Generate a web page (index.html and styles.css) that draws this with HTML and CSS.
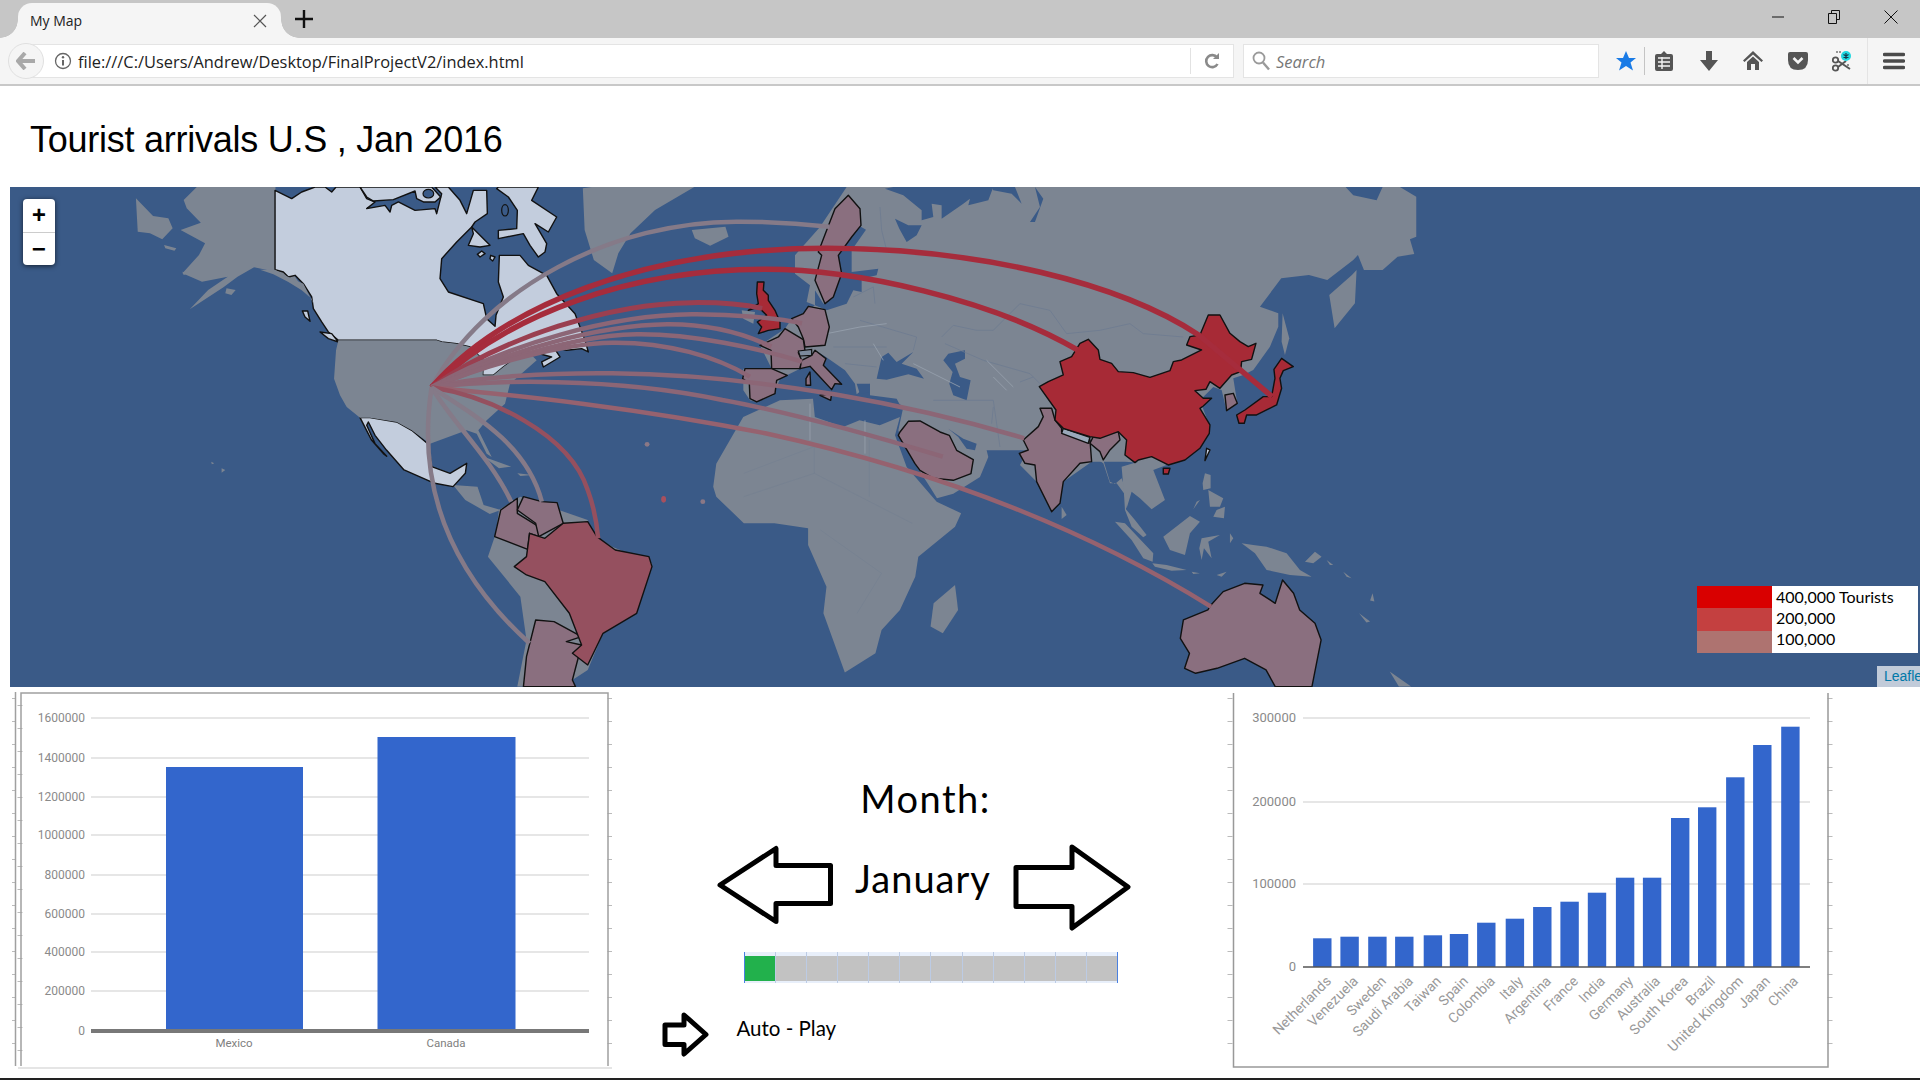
FILE: index.html
```html
<!DOCTYPE html>
<html lang="en">
<head>
  <meta charset="UTF-8">
  <title>My Map</title>
  <link rel="stylesheet" href="styles.css">
</head>
<body>
  <div class="tabstrip">
    <div class="tab">
      <span class="tab-title">My Map</span>
      <svg class="tab-close" width="14" height="14" viewBox="0 0 14 14"><path d="M1 1L13 13M13 1L1 13" stroke="#555" stroke-width="1.2" fill="none"/></svg>
    </div>
    <svg class="newtab" width="18" height="18" viewBox="0 0 18 18"><path d="M9 0V18M0 9H18" stroke="#111" stroke-width="2.4"/></svg>
    <div class="winctl">
      <div class="winbtn"><svg width="12" height="12" viewBox="0 0 12 12"><path d="M0 6H12" stroke="#111" stroke-width="1"/></svg></div>
      <div class="winbtn"><svg width="12" height="14" viewBox="0 0 12 14"><path d="M3.5 3V.5H11.5V9.500H8.500M.5 3.500H8.500V13.500H.5Z" stroke="#111" stroke-width="1" fill="none"/></svg></div>
      <div class="winbtn"><svg width="14" height="14" viewBox="0 0 14 14"><path d="M.5 .5L13.500 13.500M13.500 .5L.5 13.500" stroke="#111" stroke-width="1" fill="none"/></svg></div>
    </div>
  </div>

  <div class="toolbar">
    <div class="back"><svg width="20" height="18" viewBox="0 0 20 18"><path d="M9 1L2 9L9 17M2.500 9H19" stroke="#a9a9a9" stroke-width="4" fill="none"/></svg></div>
    <div class="urlbar">
      <svg class="info" width="18" height="18" viewBox="0 0 18 18"><circle cx="9" cy="9" r="7.500" stroke="#666" stroke-width="1.300" fill="none"/><path d="M9 8V13.500" stroke="#666" stroke-width="2"/><circle cx="9" cy="5.300" r="1.200" fill="#666"/></svg>
      <span class="url">file:///C:/Users/Andrew/Desktop/FinalProjectV2/index.html</span>
      <span class="url-sep"></span>
      <svg class="reload" width="16" height="18" viewBox="0 0 16 18"><path d="M13 5.500A6 6 0 1 0 13.500 12" stroke="#8a8a8a" stroke-width="2.600" fill="none"/><path d="M9 7H15V1Z" fill="#8a8a8a"/></svg>
    </div>
    <div class="searchbar">
      <svg width="18" height="20" viewBox="0 0 18 20"><circle cx="7" cy="7" r="5.500" stroke="#9a9a9a" stroke-width="1.800" fill="none"/><path d="M11 11.500L17 18.500" stroke="#9a9a9a" stroke-width="2.400"/></svg>
      <span class="search-text">Search</span>
    </div>
    <svg class="star" width="20" height="20" viewBox="0 0 20 20"><path d="M10 0L13 7H20L14.500 11.500L17 19.500L10 15L3 19.500L5.500 11.500L0 7H7Z" fill="#1a7be6"/></svg>
    <span class="tool-sep first"></span>
    <div class="tools">
      <svg width="20" height="20" viewBox="0 0 20 20"><path d="M7 3L10 0L13 3H17Q19 3 19 5V18Q19 20 17 20H3Q1 20 1 18V5Q1 3 3 3Z" fill="#555"/><path d="M4 7H16M4 11H16M4 15H16M8 6V18" stroke="#f5f5f5" stroke-width="1.400"/></svg>
      <svg width="20" height="20" viewBox="0 0 20 20"><path d="M7 0H13V9H19L10 20L1 9H7Z" fill="#555"/></svg>
      <svg width="20" height="20" viewBox="0 0 20 20"><path d="M10 0L20 9.500L18.500 11L10 3.500L1.500 11L0 9.500Z" fill="#555"/><path d="M4 11L10 5.500L16 11V19H12V13H8V19H4Z" fill="#555"/></svg>
      <svg width="20" height="20" viewBox="0 0 20 20"><path d="M2 1H18Q20 1 20 3V9Q20 19 10 19Q0 19 0 9V3Q0 1 2 1Z" fill="#555"/><path d="M5.500 7L10 11.500L14.500 7" stroke="#f5f5f5" stroke-width="2.600" fill="none"/></svg>
      <svg width="20" height="22" viewBox="0 0 20 22"><circle cx="3.500" cy="18" r="2.700" stroke="#555" stroke-width="1.800" fill="none"/><circle cx="3.500" cy="10" r="2.700" stroke="#555" stroke-width="1.800" fill="none"/><path d="M6 11L18 19M6 17L14 11" stroke="#555" stroke-width="2"/><path d="M4 2H10M16 14V17" stroke="#777" stroke-width="1.600" stroke-dasharray="2 1"/><circle cx="14" cy="6" r="5" fill="#1fd7e0"/><path d="M14 3V9M11.500 4.500L16.500 7.500M16.500 4.500L11.500 7.500" stroke="#15384a" stroke-width="1.200"/></svg>
    </div>
    <span class="tool-sep last"></span>
    <svg class="menu" width="22" height="18" viewBox="0 0 22 18"><path d="M1.500 2.500H20.500M1.500 9H20.500M1.500 15.500H20.500" stroke="#4a4a4a" stroke-width="3.400" stroke-linecap="round"/></svg>
  </div>

  <h1>Tourist arrivals U.S , Jan 2016</h1>

  <div class="map">
    <svg class="world" width="1910" height="500" viewBox="10 187 1910 500">
      <!-- far west and south -->
      <g class="land" transform="translate(0 180) scale(.6122 .3333)">
        <path d="M322 20L450 20L450 268L480 285L500 340L490 310L450 275L415 262L388 290L365 322L310 388L340 330L372 290L330 305L298 280L325 225L335 190L295 150L328 128L305 85L300 60Z"/>
        <path d="M222 55L250 108L275 115L282 145L265 178L245 160L225 155Z"/>
        <path d="M268 195L288 205L285 212L270 205ZM298 275L308 280L300 285ZM370 325L385 330L378 345L368 340Z"/>
        <path d="M952 25L970 20L1135 20L1070 90L1030 160L1010 220L1000 280L970 240L955 150Z"/>
        <path d="M1130 150L1185 140L1190 170L1160 197L1135 175Z"/>
        <path d="M1170 851L1214 711L1274 661L1328 656L1331 711L1377 741L1404 721L1437 736L1470 711L1462 766L1481 861L1530 965L1570 1000L1560 1040L1500 1130L1495 1190L1470 1290L1440 1350L1430 1420L1380 1478L1345 1300L1350 1220L1320 1095L1320 1045L1265 1030L1215 1030L1170 950L1165 920Z"/>
        <path d="M1560 1215L1565 1290L1540 1360L1520 1340L1525 1270Z"/>
        <path d="M2238 1262L2242 1240L2245 1265ZM2220 1300L2238 1325L2232 1328Z"/>
        <path d="M2270 1475L2305 1520L2285 1520Z"/>
        <path d="M790 830L835 860L815 865ZM845 880L870 885L850 888Z"/>
        <path d="M345 845L350 850L346 853ZM362 865L368 870L362 878Z"/>
        <path d="M740 915L780 920L790 975L818 990L800 1002L760 960Z"/>
        <path d="M815 990L850 950L960 1020L965 1060L1000 1100L1065 1150L1040 1300L985 1360L960 1470L935 1500L940 1520L845 1520L860 1380L850 1250L797 1130L810 1060Z"/>
      </g>

      <!-- europe and asia, drawn at 3x from here on -->
      <g transform="translate(700 187) scale(.3333)">
        <g class="land">
          <path d="M440 0L1937 0L1960 25L2030 40L2048 0L2100 0L2149 29L2149 149L2130 157L2143 201L2093 209L2048 249L1992 249L1974 204L1960 219L1882 279L1827 264L1744 274L1680 359L1735 379L1735 419L1710 479L1660 549L1630 564L1600 574L1612 649L1580 671L1565 609L1540 600L1500 640L1530 720L1500 784L1405 830L1370 830L1275 824L1175 824L1090 884L1055 974L1010 884L960 834L985 790L860 790L865 810L840 870L760 920L711 934L690 900L645 830L600 745L595 730L610 660L598 650L590 635L510 625L510 590L470 622L465 590L435 550L378 510L345 490L300 545L240 575L220 625L170 645L150 640L130 610L130 545L215 545L180 475L255 425L275 395L300 385L345 355L320 345L330 295L285 260L285 205L360 120Z"/>
          <path d="M1970 249L1965 349L1904 424L1888 324L1956 264Z"/>
          <path d="M125 370L165 375L160 410L130 395Z"/>
          <g transform="translate(900 339)">
            <path d="M275 445L300 455L310 480L330 545L345 552L365 535L385 590L378 628L405 660L440 705L430 712L395 680L375 630L372 580L350 550L330 550L310 490L295 480L275 485Z"/>
            <path d="M405 488L470 475L500 495L460 510L495 600L455 628L420 595L395 575L380 625L370 560L365 500Z"/>
            <path d="M185 620L200 645L185 657Z"/>
            <path d="M345 665L375 670L460 760L458 785L430 775L395 720Z"/>
            <path d="M457 790L500 795L560 810L515 812L465 800Z"/>
            <path d="M490 710L570 648L600 665L570 700L555 765L510 750Z"/>
            <path d="M605 715L660 705L625 725L635 775L612 745L605 780L598 745Z"/>
            <path d="M615 520L632 525L632 565L610 570L608 550ZM625 570L670 595L660 620L630 620ZM650 630L675 620L672 655L640 650ZM600 600L580 628L590 605Z"/>
            <path d="M725 730L760 735L800 740L860 760L900 810L935 830L870 825L800 810L765 760Z"/>
            <path d="M915 785L945 755L965 770L940 790ZM690 700L700 715L690 730ZM575 815L600 820L580 822ZM650 825L680 815L665 830ZM980 780L1000 795L990 795ZM1030 815L1055 835L1040 830Z"/>
          </g>
        </g>
        <g class="water">
          <path d="M555 5L610 25L665 70L665 100L700 90L695 50L725 55L725 95L790 50L810 35L805 55L865 40L880 0L580 0Z"/>
          <path d="M585 95L625 115L665 115L650 145L620 165L598 125Z"/>
          <path d="M945 0L965 50L935 20L880 10L875 0Z"/>
          <path d="M1005 0L1030 35L1005 105L990 105L1020 60Z"/>
          <path d="M480 118L498 128L455 190L455 255L535 245L530 265L485 275L485 315L460 310L440 350L380 370L345 355L345 310L370 350L400 330L425 260L415 205L455 150Z"/>
          <path d="M530 575L545 510L565 497L590 525L640 495L605 530L650 545L672 575L625 562L560 578Z"/>
          <path d="M730 520L745 500L795 490L795 515L765 530L780 570L812 580L800 640L760 625L748 590L758 555Z"/>
          <path d="M470 590L510 590L510 615L480 622Z"/>
          <path d="M745 725L775 750L800 785L825 790L830 770L790 755Z"/>
        </g>
        <g class="borders">
          <path d="M725 450L760 415L830 430L880 430L960 350L1050 370L1100 440L1200 430L1290 410L1330 440L1450 450"/>
          <path d="M735 470L850 520L990 560L1020 590M880 660L875 710M960 585L1000 570M700 640L880 640L900 780"/>
          <path d="M540 60L545 130L560 190M460 330L520 300L525 350M480 400L650 450L640 490M400 480L560 480M435 530L530 540"/>
        </g>
        <g class="borders pale">
          <path d="M380 440L480 420L560 410M520 470L550 520M640 530L780 600M860 520L940 600M880 570L920 610"/>
          <path d="M330 650L330 760M495 700L495 800"/>
        </g>
        <g class="visited light" transform="translate(-1320 0)">
          <path d="M45 10L95 35L125 15L165 0L195 0L215 15L228 0L300 0L320 35L345 45L320 65L375 55L390 75L395 55L415 45L465 70L525 65L530 80L545 20L525 0L565 0L600 40L620 80L640 10L680 10L682 80L645 105L635 120L590 165L545 215L540 275L565 315L670 350L680 395L705 418L708 385L730 330L715 285L718 205L780 205L805 235L860 265L890 320L945 380L975 460L985 495L965 485L920 490L880 480L900 510L850 540L845 525L875 510L800 490L730 540L700 565L668 565L670 520L630 480L590 470L545 465L530 460L235 460L205 435L185 405L160 365L155 330L130 290L105 265L85 270L70 255L45 248Z"/>
          <path d="M715 0L835 0L815 40L890 90L865 135L825 110L860 170L855 195L835 210L810 175L790 140L715 155L715 130L770 125L772 70L745 30L710 5Z"/>
          <path d="M300 0L320 30L340 42L400 38L465 12L470 35L490 45L525 45L542 30L515 0Z"/>
          <path d="M635 120L690 175L660 180L625 175L640 140Z"/>
          <path d="M665 192L675 200L660 210L652 202ZM692 205L705 210L698 222L690 215Z"/>
          <path d="M127 372L143 372L150 403L135 390ZM180 435L215 440L235 465L205 455Z"/>
          <path d="M300 692L330 692L410 705L455 730L505 772L515 839L570 859L620 829L616 859L579 899L524 889L432 849L380 790L345 745L325 705L320 715L345 770L380 808L370 800L335 760Z"/>
        </g>
        <g class="land" transform="translate(-1320 0)">
          <path d="M0 248L45 248L85 270L130 290L160 350L155 335L125 310L85 285L40 262Z"/>
          <path d="M235 460L530 460L545 465L590 470L630 480L670 520L668 565L700 565L730 540L800 490L830 520L750 590L735 650L680 700L655 730L695 810L680 800L650 740L620 730L510 770L455 730L410 705L330 692L300 692L260 660L240 625L222 575L228 490Z"/>
        </g>
        <g class="water outline" transform="translate(-1320 0)">
          <ellipse cx="735" cy="70" rx="10" ry="17"/>
          <ellipse cx="505" cy="20" rx="16" ry="13"/>
        </g>
        <g class="visited mauve">
          <path d="M445 25L480 65L483 115L455 150L415 205L425 260L400 330L375 350L345 280L365 205L355 195L380 130L405 65Z"/>
          <path d="M325 358L375 368L388 420L375 475L315 480L310 455L295 420L275 395L310 380Z"/>
          <path d="M255 425L310 458L315 490L295 497L305 520L300 545L215 545L213 490L180 475L235 450Z"/>
          <path d="M305 520L335 505L345 490L378 515L370 535L425 592L405 590L395 608L355 565L330 538L300 545ZM360 625L395 620L392 640ZM318 575L330 555L332 595L318 595Z"/>
          <path d="M135 545L215 545L262 565L230 580L225 620L170 645L150 635L148 590L128 575Z"/>
          <path d="M625 703L660 702L720 735L748 745L770 790L820 818L813 860L760 880L700 874L660 850L645 830L595 745L600 735Z"/>
          <g transform="translate(900 339)">
            <path d="M120 325L155 325L165 360L185 385L185 395L270 420L275 485L240 490L190 545L180 610L155 635L110 545L105 495L75 490L58 460L85 450L70 420L115 380L130 350Z"/>
            <path d="M280 410L355 395L360 420L330 450L310 480L300 455L270 430Z"/>
            <path d="M675 285L700 280L712 310L680 332Z"/>
          </g>
        </g>
        <g class="visited pale-land" transform="translate(900 339)">
          <path d="M190 385L270 412L265 430L185 400Z"/>
        </g>
        <g class="visited light" transform="translate(900 339)">
          <path d="M620 445L630 450L615 482Z"/>
        </g>
        <path class="nation-grey" d="M295 492L335 487L335 505L300 507Z"/>
        <g class="visited china">
          <path d="M172 285L192 285L190 310L205 325L205 340L225 370L240 405L240 425L205 430L175 440L185 420L172 405L200 385L175 360L145 370L175 350L170 320Z"/>
          <g transform="translate(900 339)">
            <path d="M600 105L625 45L660 45L690 100L720 125L745 140L768 130L755 178L725 185L722 215L695 225L660 265L630 245L618 268L585 272L610 295L635 295L610 318L600 325L630 375L628 400L600 445L555 480L505 495L455 470L415 480L405 488L375 465L380 420L355 395L300 415L270 410L190 385L165 360L168 330L118 260L145 245L190 225L180 185L215 170L240 130L265 118L295 150L300 178L335 190L355 215L400 218L450 232L510 212L520 185L545 180L605 150L560 135L570 110Z"/>
            <path d="M845 175L880 200L850 212L840 235L845 265L830 315L800 330L770 345L740 345L733 370L717 370L710 345L735 330L790 290L815 290L825 235L822 208Z"/>
            <path d="M490 505L510 505L505 522L490 522Z"/>
          </g>
        </g>
        <path class="land" d="M1748 379L1768 454L1755 504L1745 464Z" />
      </g>

      <!-- more islands and countries of the south -->
      <g transform="translate(0 180) scale(.6122 .3333)">
        <g class="visited mauve">
          <path d="M845 955L818 990L808 1070L862 1108L865 1060L880 1070L880 1040L845 1000Z"/>
          <path d="M855 950L885 965L910 968L920 1030L880 1070L875 1030L845 990Z"/>
          <path d="M875 1320L905 1325L950 1370L925 1385L950 1395L935 1500L940 1520L855 1520L860 1430Z"/>
          <path d="M1978 1275L1998 1235L2033 1210L2063 1215L2058 1240L2083 1270L2095 1200L2113 1240L2123 1290L2148 1330L2158 1380L2143 1520L2083 1520L2068 1470L2033 1435L1988 1465L1953 1480L1935 1465L1943 1420L1928 1375L1933 1320L1973 1290Z"/>
        </g>
        <path class="visited brazil" d="M920 1030L960 1025L975 1070L1005 1110L1060 1130L1065 1160L1040 1300L985 1360L960 1455L935 1420L950 1395L930 1300L890 1205L860 1185L840 1160L860 1130L865 1060L890 1075Z"/>
        <g class="borders faint">
          <path d="M1215 880L1330 800L1330 880L1215 950M1330 880L1490 1030M1340 1050L1440 1180L1400 1300M1420 780L1420 950"/>
        </g>
        <g class="arcs">
          <path class="a-grey" d="M705 622C790 330 1000 120 1210 125C1260 125 1320 133 1355 140"/>
          <path class="a-top" d="M705 622C820 380 1050 205 1350 205C1600 205 1830 310 1958 465L2078 650"/>
          <path class="a-top" d="M705 622C830 400 1030 268 1250 268C1400 268 1620 360 1760 510"/>
          <path class="a-uk" d="M705 622C820 470 1000 370 1130 368C1180 367 1220 375 1245 385"/>
          <path class="a-mid" d="M705 622C830 490 1000 405 1130 403C1200 402 1270 415 1310 430"/>
          <path class="a-mid" d="M705 622C830 510 980 435 1090 433C1160 432 1220 465 1260 500"/>
          <path class="a-mid" d="M705 622C830 530 950 465 1040 463C1130 461 1240 505 1310 545"/>
          <path class="a-mid" d="M705 622C800 550 920 490 1000 488C1090 486 1170 530 1225 590"/>
          <path class="a-mid" d="M705 622C780 590 900 578 1000 580C1250 585 1500 680 1673 775"/>
          <path class="a-mid" d="M705 622C800 600 1000 590 1180 660C1300 700 1450 780 1540 830"/>
          <path class="a-aus" d="M705 622C800 640 1000 670 1250 760C1500 860 1750 1020 1978 1280"/>
          <path class="a-br" d="M705 622C800 650 930 760 960 930C970 980 975 1030 977 1075"/>
          <path class="a-grey" d="M705 622C770 700 860 790 885 965"/>
          <path class="a-grey" d="M705 622C740 730 800 830 835 965"/>
          <path class="a-grey" d="M705 622C690 800 690 1100 865 1390"/>
        </g>
        <ellipse class="dot-grey" cx="1057" cy="793" rx="4" ry="7"/>
        <ellipse class="dot-red" cx="1084" cy="958" rx="4" ry="10"/>
        <ellipse class="dot-grey" cx="1148" cy="965" rx="4" ry="7"/>
      </g>
    </svg>

    <div class="zoom">
      <div class="zoom-btn">+</div>
      <div class="zoom-btn">&minus;</div>
    </div>

    <div class="legend">
      <div class="swatches">
        <span class="swatch s1"></span>
        <span class="swatch s2"></span>
        <span class="swatch s3"></span>
      </div>
      <div class="legend-labels">
        <div>400,000 Tourists</div>
        <div>200,000</div>
        <div>100,000</div>
      </div>
    </div>

    <div class="attribution">Leaflet</div>
  </div>

  <div class="panels">
    <svg class="chart-left" width="600" height="391" viewBox="12 687 600 391">
      <path class="ticks" d="M12.500 698V1066M20 705V1066M610 698V1066"/>
      <path class="frame" d="M15.500 692V1066M21 1066V693H608V1066"/>
      <path class="frame-base" d="M18 1068H612"/>
      <g class="grid">
        <path d="M91 718H589M91 758H589M91 797H589M91 835H589M91 875H589M91 914H589M91 952H589M91 991H589"/>
      </g>
      <g class="ylabels">
        <text x="85" y="722">1600000</text>
        <text x="85" y="762">1400000</text>
        <text x="85" y="801">1200000</text>
        <text x="85" y="839">1000000</text>
        <text x="85" y="879">800000</text>
        <text x="85" y="918">600000</text>
        <text x="85" y="956">400000</text>
        <text x="85" y="995">200000</text>
        <text x="85" y="1035">0</text>
      </g>
      <rect class="bar" x="166" y="767" width="137" height="262"/>
      <rect class="bar" x="377.500" y="737" width="138" height="292"/>
      <path class="axis-thick" d="M91 1031H589"/>
      <text class="xlabel" x="234" y="1047">Mexico</text>
      <text class="xlabel" x="446" y="1047">Canada</text>
    </svg>

    <div class="controls">
      <div class="month-label">Month:</div>
      <div class="month-row">
        <svg width="116" height="84" viewBox="0 0 116 84"><path class="big-arrow" d="M3 41L59 4.500V21.500H113.500V59.500H59V77.500Z"/></svg>
        <span class="month-name">January</span>
        <svg width="118" height="88" viewBox="0 0 118 88"><path class="big-arrow" d="M3 23.500H59V3L115 43L59 84V62.500H3Z"/></svg>
      </div>
      <div class="progress">
        <span class="cell on"></span><span class="cell"></span><span class="cell"></span><span class="cell"></span>
        <span class="cell"></span><span class="cell"></span><span class="cell"></span><span class="cell"></span>
        <span class="cell"></span><span class="cell"></span><span class="cell"></span><span class="cell"></span>
      </div>
      <div class="autoplay">
        <svg width="47" height="45" viewBox="0 0 47 45"><path class="small-arrow" d="M3 13H22V3L44 22.500L22 42V32.500H3Z"/></svg>
        <span class="autoplay-text">Auto - Play</span>
      </div>
    </div>

    <svg class="chart-right" width="610" height="391" viewBox="1225 687 610 391">
      <path class="ticks" d="M1230 698V1066M1830 698V1066"/>
      <path class="frame" d="M1233.500 693V1067H1828V693"/>
      <g class="grid">
        <path d="M1303 718H1810M1303 802H1810M1303 884H1810"/>
      </g>
      <g class="ylabels big">
        <text x="1296" y="722">300000</text>
        <text x="1296" y="806">200000</text>
        <text x="1296" y="888">100000</text>
        <text x="1296" y="971">0</text>
      </g>
      <g class="bars">
        <rect x="1313.100" y="938.300" width="18.400" height="28.700"/>
        <rect x="1340.400" y="936.700" width="18.400" height="30.300"/>
        <rect x="1368.200" y="936.700" width="18.400" height="30.300"/>
        <rect x="1395.100" y="936.700" width="18.400" height="30.300"/>
        <rect x="1423.700" y="935.300" width="18.400" height="31.700"/>
        <rect x="1449.800" y="934" width="18.400" height="33"/>
        <rect x="1477.100" y="922.700" width="18.400" height="44.300"/>
        <rect x="1505.700" y="918.700" width="18.400" height="48.300"/>
        <rect x="1533.100" y="907" width="18.400" height="60"/>
        <rect x="1560.400" y="901.700" width="18.400" height="65.300"/>
        <rect x="1587.800" y="892.700" width="18.400" height="74.300"/>
        <rect x="1615.900" y="877.700" width="18.400" height="89.300"/>
        <rect x="1642.900" y="877.700" width="18.400" height="89.300"/>
        <rect x="1671" y="818" width="18.400" height="149"/>
        <rect x="1698" y="807.300" width="18.400" height="159.700"/>
        <rect x="1726.100" y="777.300" width="18.400" height="189.700"/>
        <rect x="1753.100" y="745" width="18.400" height="222"/>
        <rect x="1781.200" y="726.700" width="18.400" height="240.300"/>
      </g>
      <path class="axis" d="M1303 967H1810"/>
      <g class="xlabels">
        <text transform="translate(1332 982) rotate(-45)">Netherlands</text>
        <text transform="translate(1359 982) rotate(-45)">Venezuela</text>
        <text transform="translate(1387 982) rotate(-45)">Sweden</text>
        <text transform="translate(1414 982) rotate(-45)">Saudi Arabia</text>
        <text transform="translate(1442 982) rotate(-45)">Taiwan</text>
        <text transform="translate(1469 982) rotate(-45)">Spain</text>
        <text transform="translate(1496 982) rotate(-45)">Colombia</text>
        <text transform="translate(1524 982) rotate(-45)">Italy</text>
        <text transform="translate(1552 982) rotate(-45)">Argentina</text>
        <text transform="translate(1579 982) rotate(-45)">France</text>
        <text transform="translate(1606 982) rotate(-45)">India</text>
        <text transform="translate(1634 982) rotate(-45)">Germany</text>
        <text transform="translate(1661 982) rotate(-45)">Australia</text>
        <text transform="translate(1689 982) rotate(-45)">South Korea</text>
        <text transform="translate(1716 982) rotate(-45)">Brazil</text>
        <text transform="translate(1744 982) rotate(-45)">United Kingdom</text>
        <text transform="translate(1771 982) rotate(-45)">Japan</text>
        <text transform="translate(1799 982) rotate(-45)">China</text>
      </g>
    </svg>
  </div>
  <div class="taskbar"></div>
</body>
</html>
```

FILE: styles.css
```css
html, body {
  margin: 0;
  padding: 0;
  height: 1080px;
  overflow: hidden;
  background: #fff;
  font-family: "Liberation Sans", Arial, sans-serif;
}

/* browser chrome */
.tabstrip {
  display: flex;
  align-items: flex-start;
  height: 38px;
  background: #c6c6c6;
}

.tab {
  position: relative;
  display: flex;
  align-items: center;
  justify-content: space-between;
  box-sizing: border-box;
  width: 263px;
  height: 35px;
  margin: 3px 0 0 18px;
  padding: 0 14px 0 12px;
  background: #f5f5f5;
  border-radius: 14px 14px 0 0;
}

.tab::before,
.tab::after {
  content: "";
  position: absolute;
  bottom: 0;
  width: 18px;
  height: 18px;
}

.tab::before {
  left: -18px;
  background: radial-gradient(circle at 0 0, transparent 17.500px, #f5f5f5 18px);
}

.tab::after {
  right: -18px;
  background: radial-gradient(circle at 100% 0, transparent 17.500px, #f5f5f5 18px);
}

.tab-title {
  font-family: "Open Sans", sans-serif;
  font-size: 14px;
  color: #222;
}

.newtab {
  margin: 10px 0 0 14px;
}

.winctl {
  display: flex;
  margin-left: auto;
  padding-right: 1px;
}

.winbtn {
  display: flex;
  align-items: center;
  justify-content: center;
  width: 56.500px;
  height: 34px;
}

.toolbar {
  display: flex;
  align-items: center;
  box-sizing: border-box;
  height: 48px;
  padding-left: 8px;
  background: #f5f5f5;
  border-bottom: 2px solid #c8c8c8;
}

.back {
  position: relative;
  z-index: 1;
  display: flex;
  align-items: center;
  justify-content: center;
  box-sizing: border-box;
  width: 36px;
  height: 36px;
  background: #f5f5f5;
  border: 1px solid #e0e0e0;
  border-radius: 50%;
}

.urlbar {
  display: flex;
  align-items: center;
  box-sizing: border-box;
  width: 1208px;
  height: 34px;
  margin-left: -18px;
  padding-left: 27px;
  background: #fff;
  border: 1px solid #e4e4e4;
}

.url {
  margin-left: 6px;
  font-family: "Open Sans", sans-serif;
  font-size: 16.400px;
  color: #222;
  white-space: nowrap;
}

.url-sep {
  width: 1px;
  height: 26px;
  margin-left: auto;
  background: #e2e2e2;
}

.reload {
  margin: 0 13px;
}

.searchbar {
  display: flex;
  align-items: center;
  box-sizing: border-box;
  width: 356px;
  height: 34px;
  margin-left: 9px;
  padding-left: 8px;
  background: #fff;
  border: 1px solid #e4e4e4;
}

.search-text {
  margin-left: 6px;
  font-family: "Open Sans", sans-serif;
  font-size: 16.500px;
  font-style: italic;
  color: #777;
}

.star {
  margin-left: 17px;
}

.tool-sep {
  width: 1px;
  height: 28px;
  background: #c4c4c4;
}

.tool-sep.first {
  margin: 0 9px 0 8px;
}

.tool-sep.last {
  height: 46px;
  margin-left: 15px;
  background: #e4e4e4;
}

.tools {
  display: flex;
  align-items: center;
  gap: 24.500px;
}

.menu {
  margin-left: 15px;
}

h1 {
  box-sizing: border-box;
  height: 101px;
  margin: 0;
  padding: 33px 0 0 30px;
  font-size: 36px;
  font-weight: normal;
  letter-spacing: -.25px;
  line-height: 42px;
  color: #000;
}

/* map */
.map {
  position: relative;
  height: 500px;
  margin-left: 10px;
  overflow: hidden;
  background: #3a5a87;
}

.world {
  display: block;
}

.world path,
.world ellipse {
  vector-effect: non-scaling-stroke;
}

.land path,
path.land {
  fill: #7c8592;
}

.water path {
  fill: #3a5a87;
}

.outline ellipse {
  fill: #3a5a87;
  stroke: #111;
  stroke-width: 1.200;
}

.borders path {
  fill: none;
  stroke: #6d7b90;
  stroke-width: .8;
}

.borders.pale path {
  stroke: #98a2ae;
}

.borders.faint path {
  stroke: #737f90;
  stroke-width: .6;
}

.visited path,
.brazil {
  stroke: #111;
  stroke-width: 1.400;
  stroke-linejoin: round;
}

.light path {
  fill: #c3cddd;
}

.pale-land path {
  fill: #9aa9ba;
}

.mauve path {
  fill: #8a6f7f;
}

.brazil {
  fill: #95505f;
}

.china path {
  fill: #a72a36;
}

.nation-grey {
  fill: #7c8a9c;
  stroke: #111;
  stroke-width: 1.200;
}

.arcs path {
  fill: none;
  stroke-width: 4.500;
}

.arcs .a-grey {
  stroke: #857a88;
}

.arcs .a-top {
  stroke: #a62c3c;
  stroke-width: 5.500;
}

.arcs .a-uk {
  stroke: #9a3f50;
  stroke-width: 5;
}

.arcs .a-mid {
  stroke: #8c6676;
}

.arcs .a-aus {
  stroke: #96626f;
}

.arcs .a-br {
  stroke: #95505f;
}

.dot-grey {
  fill: #8b7886;
}

.dot-red {
  fill: #a8505e;
}

.zoom {
  position: absolute;
  top: 12px;
  left: 13px;
  width: 32px;
  background: #fff;
  border-radius: 4px;
  box-shadow: 0 1px 5px rgba(0, 0, 0, .65);
}

.zoom-btn {
  box-sizing: border-box;
  height: 33px;
  padding-top: 2px;
  font-family: "Liberation Mono", monospace;
  font-size: 24px;
  font-weight: bold;
  line-height: 31px;
  text-align: center;
  color: #000;
}

.zoom-btn + .zoom-btn {
  border-top: 1px solid #ccc;
}

.legend {
  position: absolute;
  top: 399px;
  left: 1687px;
  display: flex;
  width: 221px;
  height: 67px;
  background: #fff;
  font-family: Lato, sans-serif;
  font-size: 16px;
  line-height: 21px;
  color: #000;
}

.swatches {
  display: flex;
  flex-direction: column;
  width: 75px;
  margin-right: 4px;
}

.swatch {
  flex: 1;
}

.s1 { background: #d90000; }
.s2 { background: #c44040; }
.s3 { background: #ae7370; }

.attribution {
  position: absolute;
  right: -26px;
  bottom: 0;
  height: 21px;
  padding: 0 20px 0 7px;
  background: #c1cbd9;
  font-size: 14px;
  line-height: 21px;
  color: #0078a8;
}

/* bottom row */
.panels {
  display: flex;
  height: 391px;
}

.chart-left {
  flex: none;
  margin-left: 12px;
}

.chart-right {
  flex: none;
  margin-right: 85px;
}

.frame {
  fill: none;
  stroke: #a0a0a0;
  stroke-width: 1.500;
}

.frame-base {
  stroke: #dcdcdc;
  stroke-width: 1.500;
}

.chart-right .frame {
  stroke: #999;
}

.ticks {
  fill: none;
  stroke: #bbb;
  stroke-width: 5;
  stroke-dasharray: 1 22;
}

.grid path {
  fill: none;
  stroke: #dedede;
  stroke-width: 1.500;
}

.ylabels text {
  font-family: Roboto, sans-serif;
  font-size: 12px;
  fill: #8a8a8a;
  text-anchor: end;
}

.ylabels.big text {
  font-size: 13px;
}

.bar,
.bars rect {
  fill: #3366cc;
}

.axis-thick {
  stroke: #787878;
  stroke-width: 4;
}

.axis {
  stroke: #555;
  stroke-width: 1.500;
}

.xlabel {
  font-family: Roboto, sans-serif;
  font-size: 11.500px;
  fill: #808080;
  text-anchor: middle;
}

.xlabels text {
  font-family: Roboto, sans-serif;
  font-size: 14px;
  fill: #999;
  text-anchor: end;
}

.controls {
  flex: 1;
  display: flex;
  flex-direction: column;
  align-items: center;
  padding-top: 88px;
}

.month-label {
  margin-left: 14px;
  font-family: Lato, sans-serif;
  font-size: 38px;
  letter-spacing: 1.500px;
  line-height: 46px;
  color: #000;
}

.month-row {
  display: flex;
  align-items: flex-start;
  gap: 22px;
  margin: 23px 0 0 11px;
}

.month-name {
  margin-top: 11px;
  font-family: Lato, sans-serif;
  font-size: 38px;
  letter-spacing: 1px;
  line-height: 46px;
  color: #000;
}

.big-arrow {
  fill: #fff;
  stroke: #000;
  stroke-width: 5;
  stroke-linejoin: round;
}

.small-arrow {
  fill: #fff;
  stroke: #000;
  stroke-width: 5;
  stroke-linejoin: round;
}

.progress {
  display: flex;
  box-sizing: border-box;
  width: 374px;
  height: 31px;
  margin: 20px 0 0 25px;
  border-left: 1px solid #4a80e0;
  border-right: 1px solid #4a80e0;
}

.cell {
  flex: 1;
  border-left: 1px solid #bccbe4;
  background: linear-gradient(#e8effa 0 4px, #c2c2c2 4px 29px, #e8effa 29px);
}

.cell.on {
  border-left: 0;
  background: linear-gradient(#e8effa 0 4px, #22b14c 4px 29px, #e8effa 29px);
}

.autoplay {
  display: flex;
  align-items: center;
  align-self: flex-start;
  gap: 27.500px;
  margin: 29px 0 0 50px;
  font-family: Lato, sans-serif;
  font-size: 20.500px;
  color: #000;
}

.autoplay-text {
  margin-bottom: 13px;
}

.taskbar {
  height: 2px;
  background: #222;
}
```
